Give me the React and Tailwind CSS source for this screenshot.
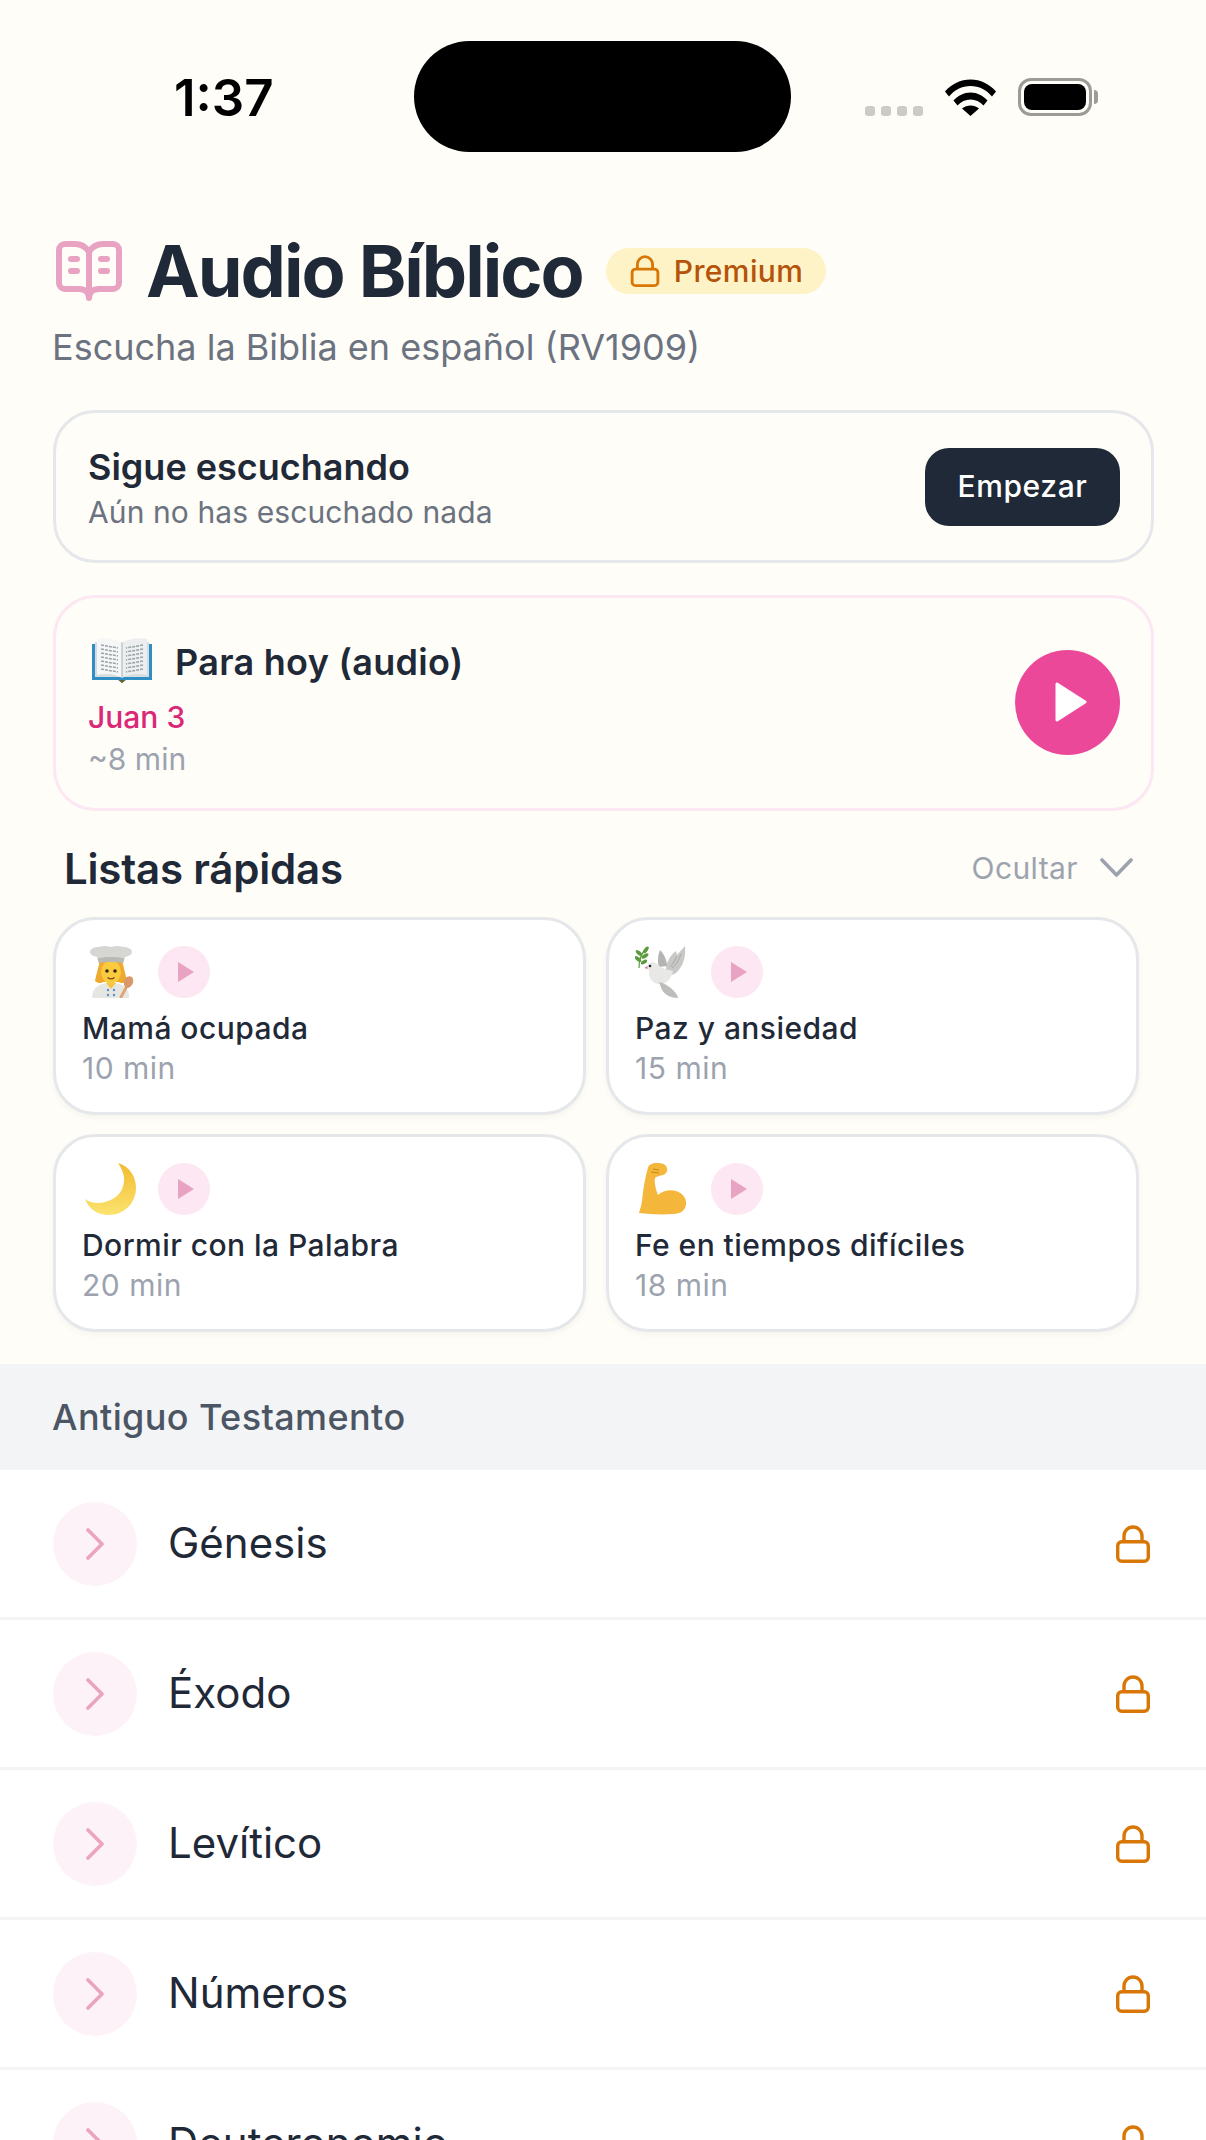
import { useState } from 'react';

const quickLists = [
  { key: 'mama', title: 'Mamá ocupada', time: '10 min', Emoji: ChefEmoji },
  { key: 'paz', title: 'Paz y ansiedad', time: '15 min', Emoji: DoveEmoji },
  { key: 'dormir', title: 'Dormir con la Palabra', time: '20 min', Emoji: MoonEmoji },
  { key: 'fe', title: 'Fe en tiempos difíciles', time: '18 min', Emoji: MuscleEmoji },
];

const books = ['Génesis', 'Éxodo', 'Levítico', 'Números', 'Deuteronomio'];

function LockIcon({ className }) {
  return (
    <svg viewBox="0 0 34 38" fill="none" stroke="currentColor" strokeWidth="3.4" className={className}>
      <path d="M8 17V11a9 9 0 0 1 18 0v6" />
      <rect x="1.7" y="16.7" width="30.6" height="19.6" rx="4" />
    </svg>
  );
}

function BookIcon() {
  return (
    <svg viewBox="0 0 66 60" fill="none" stroke="#e9a3c2" strokeWidth="6" strokeLinecap="round" strokeLinejoin="round" className="w-[66px] h-[60px] shrink-0">
      <path d="M33 11C30 6 25 3 19 3H9a6 6 0 0 0-6 6v33a6 6 0 0 0 6 6h14c6 0 10 3 10 9 0-6 4-9 10-9h14a6 6 0 0 0 6-6V9a6 6 0 0 0-6-6H47c-6 0-11 3-14 8z" />
      <path d="M33 11v44" />
      <path d="M15 18h6M15 30h6M45 18h6M45 30h6" />
    </svg>
  );
}

function WifiIcon() {
  return (
    <svg viewBox="0 0 51 37" className="w-[51px] h-[37px]" fill="#000">
      <path d="M0 12.5C6.5 5 15.5 0.5 25.5 0.5S44.500 5 51 12.5l-4 5C41.500 11 34 7 25.500 7S9.500 11 4 17.500z" />
      <path d="M8.500 21.500C13 16.500 19 13.500 25.500 13.500S38 16.500 42.500 21.500l-4 5C35 22.500 30.500 20.500 25.500 20.500S16 22.500 12.500 26.500z" />
      <path d="M17 29.500C19.500 27.500 22.500 26.500 25.500 26.500S31.500 27.500 34 29.500L25.500 37z" />
    </svg>
  );
}

function OpenBookEmoji() {
  return (
    <svg viewBox="0 0 60 47" className="w-[60px] h-[47px]">
      <path d="M0 7h60v36H34l-4 3-4-3H0z" fill="#2f8fc4" />
      <path d="M3 5h54v35H3z" fill="#d7dcdf" />
      <path d="M5 2c10-2 19 0 25 4v35c-6-4-15-5-25-3z" fill="#f5f6f6" />
      <path d="M55 2c-10-2-19 0-25 4v35c6-4 15-5 25-3z" fill="#eceeef" />
      <path d="M9 8l17 3M9 12l17 3M9 16l17 3M9 20l17 3M9 24l17 3M9 28l17 3M9 32l17 3M51 8l-17 3M51 12l-17 3M51 16l-17 3M51 20l-17 3M51 24l-17 3M51 28l-17 3M51 32l-17 3" stroke="#9aa3a8" strokeWidth="1.500" strokeDasharray="3 1" />
      <path d="M30 6v35" stroke="#a9b0b4" strokeWidth="1" />
      <path d="M27 43h6l-3 3z" fill="#7a5a1e" />
    </svg>
  );
}

function ChefEmoji() {
  return (
    <svg viewBox="0 0 60 52" className="w-[60px] h-[52px]">
      <path d="M10 52c0-9 5-15 19-15s18 6 18 15z" fill="#e6e6e3" />
      <path d="M24 37h10l-5 6z" fill="#f6c445" />
      <path d="M18 14h22c1 5 4 16 5 21-2 2-6 3-8 1H21c-2 2-6 1-8-1 1-5 4-16 5-21z" fill="#efa92c" />
      <ellipse cx="29" cy="26" rx="10" ry="11.500" fill="#fbcb3f" />
      <circle cx="25" cy="25" r="1.800" fill="#3a2a12" />
      <circle cx="33" cy="25" r="1.800" fill="#3a2a12" />
      <path d="M25.500 31.500c2.300 1.800 4.700 1.800 7 0" stroke="#7a4a12" strokeWidth="1.300" fill="none" />
      <path d="M15 11C10 10 8 8 8 6 8 3 12 1 17 1c4-1.500 8-1 12 0 4-1 8-1.500 12 0 5 0 9 2 9 5 0 2-2 4-7 5l-1 4H16z" fill="#d6d6d3" />
      <path d="M16 12c8-1.500 18-1.500 26 0l-.5 5c-8-1.500-17-1.500-25 0z" fill="#b9b9b6" />
      <circle cx="26" cy="44" r="1.200" fill="#5a8fc9" />
      <circle cx="32" cy="44" r="1.200" fill="#5a8fc9" />
      <circle cx="26" cy="49" r="1.200" fill="#5a8fc9" />
      <circle cx="32" cy="49" r="1.200" fill="#5a8fc9" />
      <path d="M39 51l6-11" stroke="#e0a373" strokeWidth="2.800" strokeLinecap="round" />
      <ellipse cx="46.500" cy="36" rx="4.500" ry="6" transform="rotate(24 46.500 36)" fill="#d9986a" />
    </svg>
  );
}

function DoveEmoji() {
  return (
    <svg viewBox="0 0 60 52" className="w-[60px] h-[52px]">
      <path d="M4 22C4 15 6 8 11 2" stroke="#5c9a3f" strokeWidth="1.200" fill="none" />
      <g fill="#5c9a3f">
        <ellipse cx="11" cy="4" rx="1.800" ry="4" transform="rotate(35 11 4)" />
        <ellipse cx="4" cy="7" rx="1.800" ry="4" transform="rotate(-50 4 7)" />
        <ellipse cx="10" cy="10" rx="1.800" ry="4" transform="rotate(55 10 10)" />
        <ellipse cx="3" cy="13" rx="1.800" ry="4" transform="rotate(-50 3 13)" />
        <ellipse cx="9" cy="16" rx="1.800" ry="3.500" transform="rotate(60 9 16)" />
      </g>
      <path d="M50 0c1 9-1 18-7 25-3 4-8 5-12 2-1-8 3-17 10-22l1 4z" fill="#c8c8c6" />
      <path d="M46 8c-2 6-5 11-9 14M42 10c-2 4-4 8-7 11" stroke="#a9a9a7" strokeWidth="1" fill="none" />
      <path d="M24 21c-2-5-1-12 1-17 3 3 7 9 7 16z" fill="#b4b4b2" />
      <path d="M13 18c3-3 8-2 10 1 3 3 10 5 15 6-2 9-8 14-14 13-6 0-11-6-10-13-1-2-2-4-1-7z" fill="#e8e8e6" />
      <path d="M24 36c5 1 10 4 14 8 3 3 5 6 5 8-7 0-13-3-16-8z" fill="#bdbdbb" />
      <circle cx="15" cy="20" r="1.300" fill="#222" />
      <path d="M12.500 20l-3 2 3 1z" fill="#c9707e" />
    </svg>
  );
}

function MoonEmoji() {
  return (
    <svg viewBox="0 0 60 52" className="w-[60px] h-[52px]">
      <defs>
        <linearGradient id="moonFill" x1="0" y1="0" x2="0" y2="1">
          <stop offset="0" stopColor="#f2bb30" />
          <stop offset="1" stopColor="#fbe36e" />
        </linearGradient>
      </defs>
      <path d="M36 0c11 3 18 13 18 25 0 15-12 27-27 27C15 52 7 46 3 36c5 4 13 5 20 3 13-3 20-13 19-25-1-5-3-10-6-14z" fill="url(#moonFill)" />
    </svg>
  );
}

function MuscleEmoji() {
  return (
    <svg viewBox="0 0 60 52" className="w-[60px] h-[52px]">
      <path d="M13 5c0-3 4-5 9-5 5 0 9 1 10 5 1 3-1 6-4 7-3 1-6 1-8 3-1 4 1 12 3 17 4-4 12-6 18-4 7 2 11 8 10 14-1 5-5 9-13 9-12 1-24 0-34-1 1-4 2-6 3-12 1-8 2-20 6-33z" fill="#f5b73b" />
      <path d="M18 6l6 1M16 9l8 1" stroke="#c98917" strokeWidth="1.200" fill="none" />
    </svg>
  );
}

function PlayDot() {
  return (
    <span className="w-[52px] h-[52px] rounded-full bg-[#fce7f3] flex items-center justify-center pl-[3px]">
      <svg viewBox="0 0 16 20" className="w-[16px] h-[20px]" fill="#e9a3c2">
        <path d="M0 0l16 10L0 20z" />
      </svg>
    </span>
  );
}

function QuickCard({ title, time, Emoji }) {
  return (
    <button className="h-[198px] w-full flex flex-col items-start justify-start rounded-[42px] border-[3px] border-[#e5e7eb] bg-white shadow-[0_3px_6px_rgba(0,0,0,0.04)] pl-[26px] pt-[26px] text-left">
      <div className="flex items-center gap-[16px]">
        <Emoji />
        <PlayDot />
      </div>
      <p className="mt-[10px] text-[30px] leading-[40px] font-medium text-[#1f2937] tracking-[0.45px]">{title}</p>
      <p className="text-[30px] leading-[40px] text-[#9ca3af] tracking-[0.5px]">{time}</p>
    </button>
  );
}

function BookRow({ name }) {
  return (
    <div className="h-[150px] shrink-0 flex items-center pl-[53px] pr-[56px] bg-white border-b-[3px] border-[#f3f4f6]">
      <span className="w-[84px] h-[84px] rounded-full bg-[#fdf2f8] flex items-center justify-center">
        <svg viewBox="0 0 20 32" className="w-[20px] h-[32px]" fill="none" stroke="#eba4c0" strokeWidth="3.600" strokeLinecap="round" strokeLinejoin="round">
          <path d="M3 2l14 14L3 30" />
        </svg>
      </span>
      <span className="ml-[31px] pb-[3px] flex-1 text-[42px] text-[#1f2937]">{name}</span>
      <LockIcon className="w-[34px] h-[38px] text-[#d97706]" />
    </div>
  );
}

export default function App() {
  const [showLists, setShowLists] = useState(true);

  return (
    <div className="h-[2140px] overflow-hidden flex flex-col bg-[#fffdf7] font-[Inter,sans-serif]">
      {/* status bar */}
      <div className="flex items-start pt-[41px] shrink-0">
        <div className="w-[414px] pl-[174px] pt-[27px] text-[51px] leading-[60px] font-semibold text-black">1:37</div>
        <div className="w-[377px] h-[111px] rounded-[56px] bg-black" />
        <div className="flex items-end pl-[74px] pt-[37px]">
          <div className="flex gap-[6px]">
            {[0, 1, 2, 3].map(i => (
              <span key={i} className="w-[10px] h-[10px] rounded-[3px] bg-[#cdcbc7]" />
            ))}
          </div>
          <div className="ml-[22px]">
            <WifiIcon />
          </div>
          <div className="ml-[22px] flex items-center">
            <div className="w-[74px] h-[38px] rounded-[13px] border-[3.500px] border-[#9c9b97] p-[3px]">
              <div className="w-full h-full rounded-[8px] bg-black" />
            </div>
            <span className="w-[4px] h-[14px] ml-[2px] rounded-r-full bg-[#9c9b97]" />
          </div>
        </div>
      </div>

      {/* header */}
      <div className="pl-[56px] pt-[79px] flex items-center shrink-0">
        <BookIcon />
        <h1 className="ml-[24px] text-[72px] leading-[80px] font-bold text-[#1f2937] tracking-[-2px]">Audio Bíblico</h1>
        <span className="ml-[23px] h-[46px] pl-[24px] pr-[23px] rounded-full bg-[#fef3c7] flex items-center gap-[14px]">
          <LockIcon className="w-[30px] h-[32px] text-[#d97706]" />
          <span className="text-[30px] font-medium text-[#b45309] tracking-[0.4px]">Premium</span>
        </span>
      </div>
      <p className="pl-[52px] mt-[11px] text-[36px] leading-[50px] text-[#6b7280] shrink-0">Escucha la Biblia en español (RV1909)</p>

      {/* continue listening */}
      <div className="ml-[53px] mr-[52px] mt-[38px] h-[153px] shrink-0 rounded-[42px] border-[3px] border-[#e5e7eb] flex items-center justify-between pl-[32px] pr-[31px]">
        <div className="pt-[3px]">
          <p className="text-[36px] leading-[46px] font-semibold text-[#1f2937]">Sigue escuchando</p>
          <p className="mt-[1px] text-[30px] leading-[42px] text-[#6b7280] tracking-[0.1px]">Aún no has escuchado nada</p>
        </div>
        <button className="w-[195px] h-[78px] rounded-[24px] bg-[#1f2937] text-white text-[30px] font-medium tracking-[0.6px]">Empezar</button>
      </div>

      {/* today */}
      <div className="ml-[53px] mr-[52px] mt-[32px] h-[216px] shrink-0 rounded-[42px] border-[3px] border-[#fce7f3] flex items-center justify-between pl-[32px] pr-[31px]">
        <div className="pt-[11px]">
          <div className="flex items-center">
            <span className="ml-[4px] -mt-[4px]">
              <OpenBookEmoji />
            </span>
            <span className="ml-[23px] text-[36px] leading-[48px] font-semibold text-[#1f2937] tracking-[0.3px]">Para hoy (audio)</span>
          </div>
          <p className="mt-[11px] text-[30px] leading-[40px] font-medium text-[#db2777]">Juan 3</p>
          <p className="mt-[2px] text-[30px] leading-[40px] text-[#9ca3af]">~8 min</p>
        </div>
        <button className="mb-[2px] w-[105px] h-[105px] rounded-full bg-[#ec4899] flex items-center justify-center pl-[6px]">
          <svg viewBox="0 0 32 40" className="w-[32px] h-[40px]" fill="#fff" stroke="#fff" strokeWidth="3" strokeLinejoin="round">
            <path d="M2 2l28 18L2 38z" />
          </svg>
        </button>
      </div>

      {/* quick lists */}
      <div className="ml-[64px] mr-[73px] mt-[27px] h-[60px] shrink-0 flex items-center justify-between">
        <h2 className="text-[42px] font-semibold text-[#1f2937] tracking-[-0.2px]">Listas rápidas</h2>
        <button onClick={() => setShowLists(s => !s)} className="flex items-center gap-[22px] text-[30px] text-[#9ca3af] tracking-[0.4px]">
          Ocultar
          <svg viewBox="0 0 33 20" className="w-[33px] h-[20px]" fill="none" stroke="#9ca3af" strokeWidth="3.600" strokeLinecap="round" strokeLinejoin="round">
            <path d="M2 2l14.500 15L31 2" />
          </svg>
        </button>
      </div>
      {showLists && (
        <div className="ml-[53px] mr-[67px] mt-[19px] shrink-0 grid grid-cols-2 gap-x-[20px] gap-y-[19px]">
          {quickLists.map(item => (
            <QuickCard key={item.key} title={item.title} time={item.time} Emoji={item.Emoji} />
          ))}
        </div>
      )}

      {/* old testament */}
      <div className="mt-[32px] h-[106px] shrink-0 bg-[#f3f4f6] flex items-center pl-[52px] text-[36px] font-medium text-[#4b5563] tracking-[0.4px]">
        Antiguo Testamento
      </div>
      {books.map(name => (
        <BookRow key={name} name={name} />
      ))}
    </div>
  );
}
